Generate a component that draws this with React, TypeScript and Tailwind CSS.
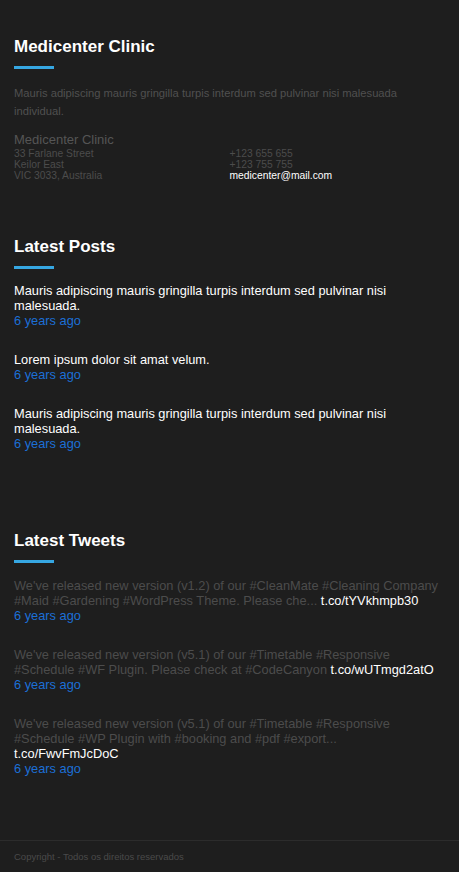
const posts = [
  "Mauris adipiscing mauris gringilla turpis interdum sed pulvinar nisi malesuada.",
  "Lorem ipsum dolor sit amat velum.",
  "Mauris adipiscing mauris gringilla turpis interdum sed pulvinar nisi malesuada.",
];

const tweets = [
  {
    text: "We've released new version (v1.2) of our #CleanMate #Cleaning Company #Maid #Gardening #WordPress Theme. Please che...",
    link: "t.co/tYVkhmpb30",
  },
  {
    text: "We've released new version (v5.1) of our #Timetable #Responsive #Schedule #WF Plugin. Please check at #CodeCanyon",
    link: "t.co/wUTmgd2atO",
  },
  {
    text: "We've released new version (v5.1) of our #Timetable #Responsive #Schedule #WP Plugin with #booking and #pdf #export...",
    link: "t.co/FwvFmJcDoC",
  },
];

function Heading({ children }: { children: string }) {
  return (
    <div>
      <h2 className="text-[17px] leading-[20px] font-bold text-white">{children}</h2>
      <div className="mt-[9px] h-[3px] w-[40px] bg-[#36a7e2]" />
    </div>
  );
}

export default function App() {
  return (
    <div className="flex min-h-[872px] flex-col bg-[#1e1e1e] font-['Liberation_Sans',Arial,sans-serif]">
      <div className="px-[14px]">
        {/* about */}
        <section className="pt-[37px]">
          <Heading>Medicenter Clinic</Heading>
          <p className="mt-[15px] pr-[8px] text-[11.2px] leading-[18px] text-[#505050]">
            Mauris adipiscing mauris gringilla turpis interdum sed pulvinar nisi malesuada individual.
          </p>
          <div className="mt-[12px] grid grid-cols-2 text-[10.3px] leading-[11px] text-[#4c4c4c]">
            <div>
              <div className="text-[13px] leading-[16px] text-[#555555]">Medicenter Clinic</div>
              <div>33 Farlane Street</div>
              <div>Keilor East</div>
              <div>VIC 3033, Australia</div>
            </div>
            <div className="pt-[16px]">
              <div>+123 655 655</div>
              <div>+123 755 755</div>
              <div className="text-white">medicenter@mail.com</div>
            </div>
          </div>
        </section>

        {/* posts */}
        <section className="mt-[56px]">
          <Heading>Latest Posts</Heading>
          <ul className="mt-[14px] flex flex-col gap-[23px]">
            {posts.map((p, i) => (
              <li key={i} className="text-[12.8px]">
                <div className="leading-[15px] text-white">{p}</div>
                <div className="leading-[16px] text-[#1c6fd6]">6 years ago</div>
              </li>
            ))}
          </ul>
        </section>

        {/* tweets */}
        <section className="mt-[79px]">
          <Heading>Latest Tweets</Heading>
          <ul className="mt-[15px] flex flex-col gap-[23px]">
            {tweets.map((t, i) => (
              <li key={i} className="text-[12.8px]">
                <p className="pr-[5px] leading-[15px] text-[#4c4c4c]">
                  {t.text} <span className="text-white">{t.link}</span>
                </p>
                <div className="leading-[16px] text-[#1c6fd6]">6 years ago</div>
              </li>
            ))}
          </ul>
        </section>
      </div>

      <footer className="mt-auto h-[32px] border-t border-[#2c2c2c] px-[14px] pt-[10px] text-[9.5px] leading-[12px] text-[#4a4a4a]">
        Copyright - Todos os direitos reservados
      </footer>
    </div>
  );
}
